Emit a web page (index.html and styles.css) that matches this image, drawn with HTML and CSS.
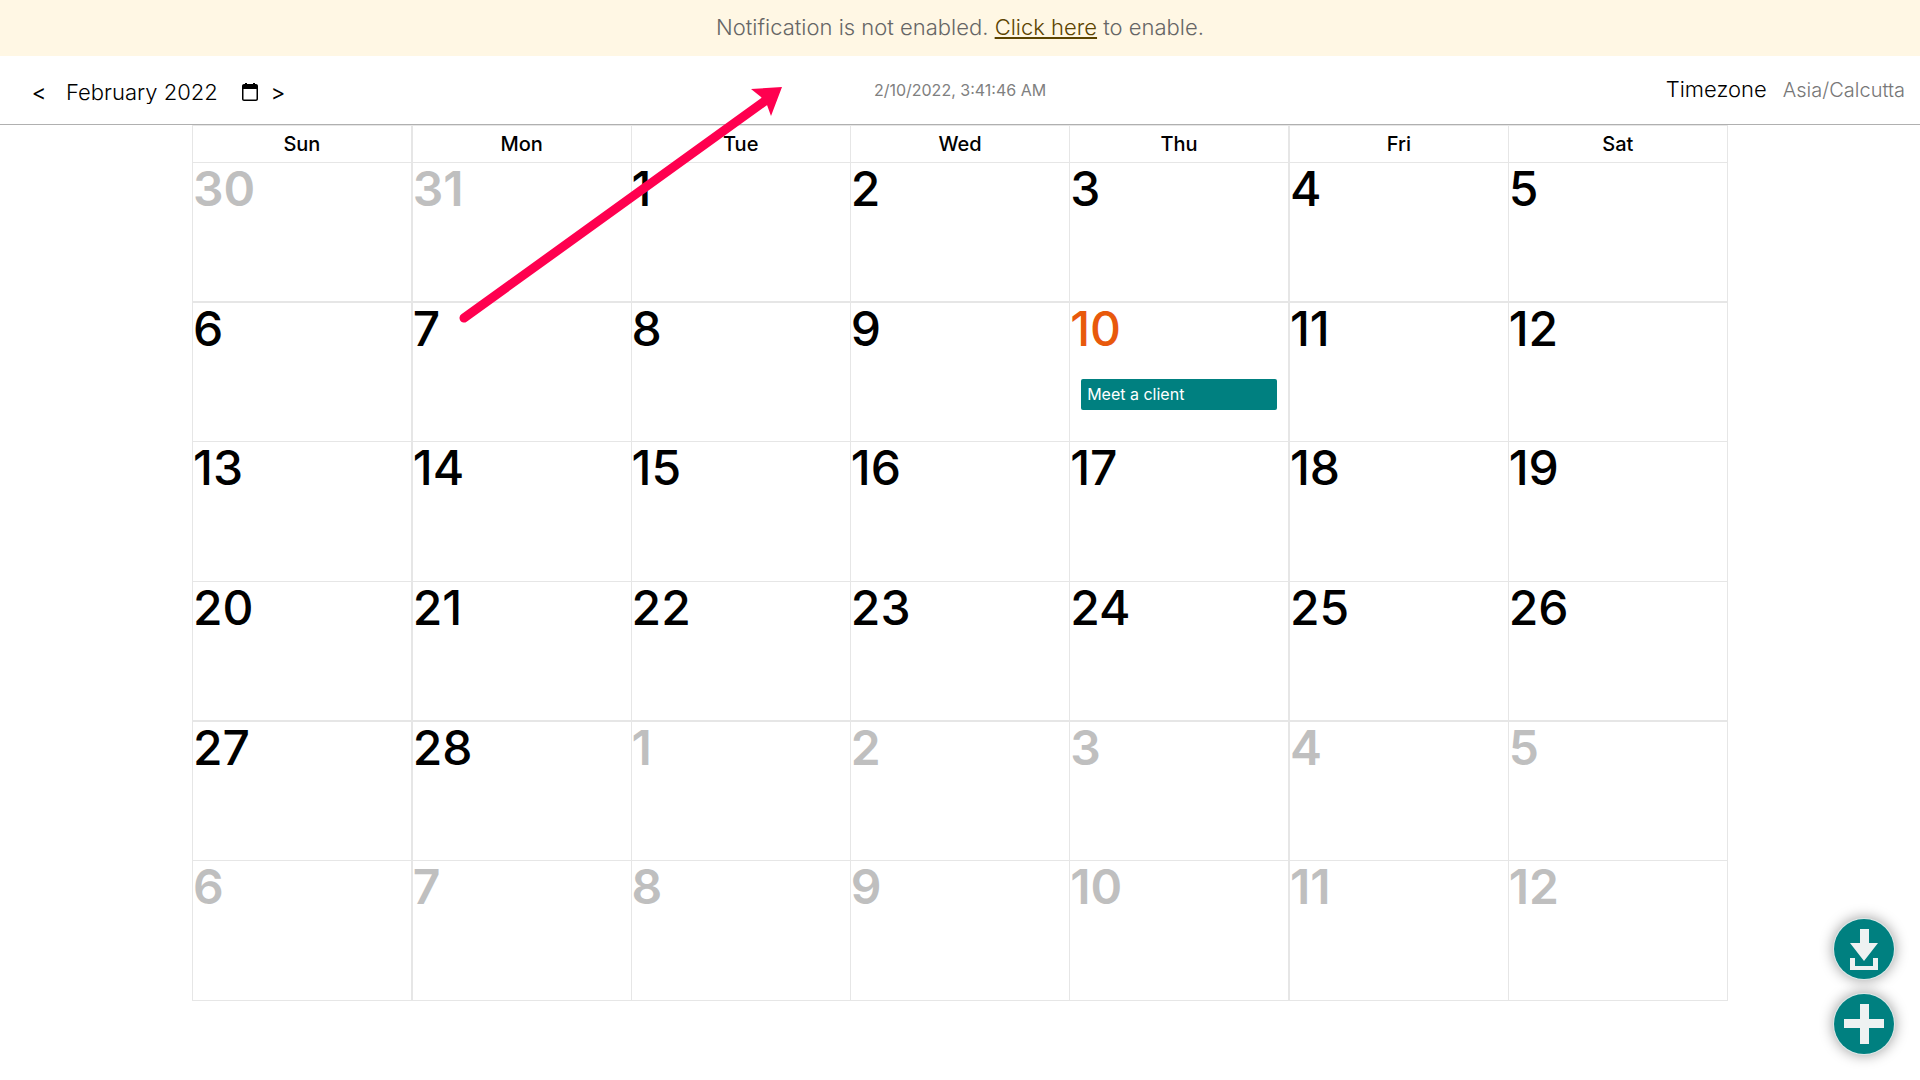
FILE: index.html
```html
<!DOCTYPE html>
<html lang="en">
<head>
<meta charset="utf-8">
<meta name="viewport" content="width=device-width, initial-scale=1">
<title>Calendar</title>
<link rel="stylesheet" href="styles.css">
</head>
<body>
<div class="notice">Notification is not enabled. <a class="notice-link" href="#enable">Click here</a> to enable.</div>
<header class="toolbar">
  <div class="month-nav">
    <button class="step" type="button" aria-label="Previous month">&lt;</button>
    <input class="month" type="text" value="February 2022" aria-label="Month">
    <button class="pick" type="button" aria-label="Choose month">
      <svg viewBox="0 0 20 20"><path d="M15 2h1c1.100 0 2 .9 2 2v13c0 1.100-.9 2-2 2H4c-1.100 0-2-.9-2-2V4c0-1.100.9-2 2-2h1V1h2v1h6V1h2zM3.500 7v10c0 .4.200.5.500.5h12c.4 0 .5-.2.500-.5V7z"/></svg>
    </button>
    <button class="step" type="button" aria-label="Next month">&gt;</button>
  </div>
  <time class="clock" datetime="2022-02-10T03:41:46">2/10/2022, 3:41:46 AM</time>
  <div class="zone"><span>Timezone</span><span class="zone-name">Asia/Calcutta</span></div>
</header>
<main>
  <table class="calendar">
    <thead>
      <tr><th>Sun</th><th>Mon</th><th>Tue</th><th>Wed</th><th>Thu</th><th>Fri</th><th>Sat</th></tr>
    </thead>
    <tbody>
      <tr><td class="other">30</td><td class="other">31</td><td>1</td><td>2</td><td>3</td><td>4</td><td>5</td></tr>
      <tr><td>6</td><td>7</td><td>8</td><td>9</td><td class="today">10<button class="event" type="button">Meet a client</button></td><td>11</td><td>12</td></tr>
      <tr><td>13</td><td>14</td><td>15</td><td>16</td><td>17</td><td>18</td><td>19</td></tr>
      <tr><td>20</td><td>21</td><td>22</td><td>23</td><td>24</td><td>25</td><td>26</td></tr>
      <tr><td>27</td><td>28</td><td class="other">1</td><td class="other">2</td><td class="other">3</td><td class="other">4</td><td class="other">5</td></tr>
      <tr><td class="other">6</td><td class="other">7</td><td class="other">8</td><td class="other">9</td><td class="other">10</td><td class="other">11</td><td class="other">12</td></tr>
    </tbody>
  </table>
</main>
<svg class="pointer" viewBox="0 0 326 240" aria-hidden="true">
  <path d="M8 234L309 17" stroke="#ff004f" stroke-width="9" stroke-linecap="round"/>
  <path d="M326 3L295 5L305 13L311 21L315 32Z" fill="#ff004f"/>
</svg>
<div class="actions">
  <button class="action" type="button" aria-label="Download">
    <svg viewBox="0 0 60 60"><path d="M26 10h9v14h9L30 42L16 24h10zM16 39h5v8h18v-8h5v12H16z"/></svg>
  </button>
  <button class="action" type="button" aria-label="Add event">
    <svg viewBox="0 0 60 60"><path d="M26 10h9v15h15v9H35v16h-9V34H10v-9h16z"/></svg>
  </button>
</div>
</body>
</html>
```
FILE: styles.css
```css
* { box-sizing: border-box; }
body {
  margin: 0;
  color: #000;
  background: #fff;
  font: 20px/24px Inter, "Liberation Sans", sans-serif;
}
button, input { font: inherit; color: inherit; }
button { border: 0; padding: 0; background: none; cursor: pointer; }

.notice {
  padding: 15px 16px 17px;
  background: #fff7e4;
  color: #666;
  font-size: 22px;
  font-weight: 300;
  text-align: center;
}
.notice-link { color: #5c4400; }

.toolbar {
  display: grid;
  grid-template-columns: 1fr auto 1fr;
  align-items: center;
  height: 69px;
  padding: 0 15px;
  border-bottom: 1px solid #b0b0b0;
}
.month-nav { display: flex; align-items: center; padding: 4px 0 0 16px; }
.step { width: 16px; font-size: 22px; }
.month {
  width: 160px;
  margin: 0 14px 0 19px;
  padding: 0;
  border: 0;
  background: none;
  font-size: 22px;
  font-weight: 300;
}
.pick { width: 20px; height: 20px; margin-right: 10px; }
.pick svg { display: block; width: 20px; height: 20px; }
.clock { color: #808080; font-size: 16px; }
.zone {
  display: flex;
  justify-content: flex-end;
  align-items: baseline;
  gap: 16px;
  padding-bottom: 2px;
  font-size: 22px;
  font-weight: 300;
}
.zone-name { color: #777; font-size: 20px; }

.calendar {
  width: 80%;
  margin: 0 auto;
  border-collapse: collapse;
  table-layout: fixed;
}
.calendar th, .calendar td { border: 1px solid #e6e6e6; }
.calendar th { height: 37px; padding: 0; font-weight: 500; }
.calendar td {
  height: 140px;
  padding: 2px 0 0;
  vertical-align: top;
  font-size: 48px;
  line-height: 48px;
  font-weight: 500;
}
.calendar th:nth-child(2), .calendar td:nth-child(2),
.calendar th:nth-child(6), .calendar td:nth-child(6) { border-left-width: 2px; }
.calendar tbody tr:nth-child(3n + 1) td { height: 139px; }
.calendar tbody tr:nth-child(3n + 2) td { border-top-width: 2px; }
.calendar .other { color: #bfbfbf; font-weight: 600; }
.calendar .today { color: #e8590c; }
.event {
  display: block;
  width: calc(100% - 22px);
  height: 31px;
  margin: 26px 0 0 11px;
  padding: 0 6px;
  border-radius: 2px;
  background: teal;
  color: #fff;
  font-size: 16px;
  line-height: 30px;
  font-weight: 400;
  text-align: left;
}

.pointer {
  position: absolute;
  top: 84px;
  left: 456px;
  width: 326px;
  height: 240px;
  fill: none;
  pointer-events: none;
}
.actions {
  position: fixed;
  right: 26px;
  bottom: 26px;
  display: grid;
  gap: 15px;
}
.action {
  width: 60px;
  height: 60px;
  border-radius: 50%;
  background: teal;
  box-shadow: 0 0 0 1px #dce8e8, 0 0 14px 1px rgba(0, 0, 0, .4);
}
.action svg { display: block; width: 60px; height: 60px; fill: #eef2f2; }
```
